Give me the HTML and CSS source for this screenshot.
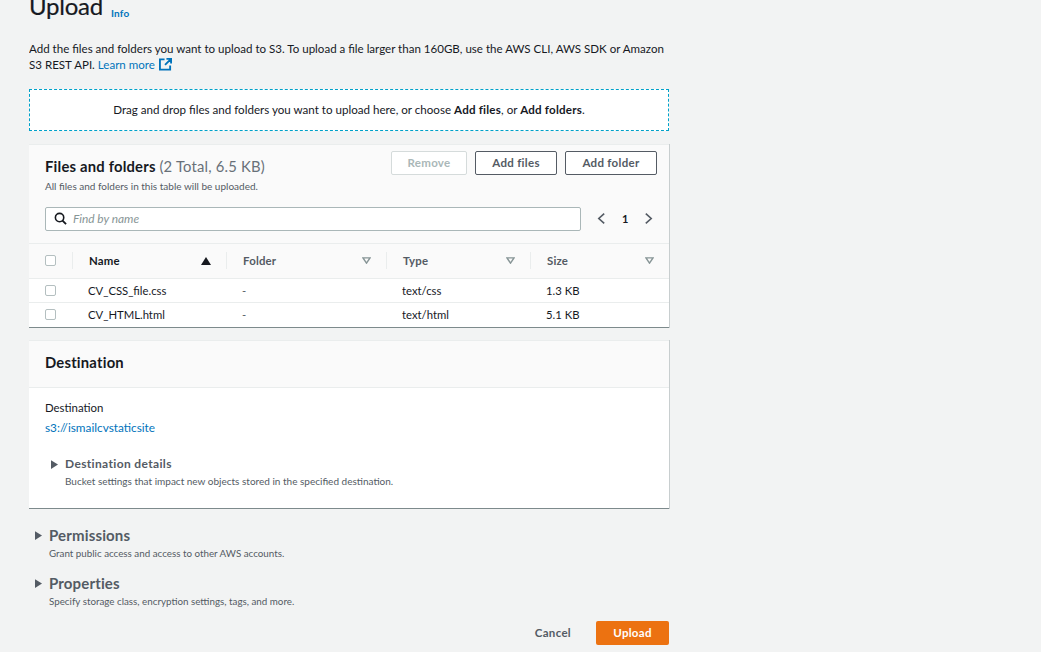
FILE: index.html
```html
<!DOCTYPE html>
<html lang="en">
<head>
<meta charset="utf-8">
<title>Upload</title>
<link rel="stylesheet" href="styles.css">
</head>
<body>
<main class="page">
  <header class="page-head">
    <h1>Upload</h1>
    <a class="info">Info</a>
  </header>
  <p class="intro">Add the files and folders you want to upload to S3. To upload a file larger than 160GB, use the AWS CLI, AWS SDK or Amazon S3 REST API. <a class="link">Learn more</a>
    <svg class="ext" viewBox="0 0 14 14" width="13" height="13"><path d="M6 1.5H1v11h11V8M8 1h5v5M13 1L6.5 7.5" fill="none" stroke="#0073bb" stroke-width="2"/></svg></p>
  <div class="drop">Drag and drop files and folders you want to upload here, or choose <b>Add files</b>, or <b>Add folders</b>.</div>

  <section class="card files">
    <div class="files-head">
      <div class="files-title">
        <h2>Files and folders <span>(2 Total, 6.5 KB)</span></h2>
        <p>All files and folders in this table will be uploaded.</p>
      </div>
      <div class="actions">
        <button class="btn disabled">Remove</button>
        <button class="btn btn-files">Add files</button>
        <button class="btn btn-folder">Add folder</button>
      </div>
    </div>
    <div class="filter">
      <div class="search">
        <svg viewBox="0 0 14 14" width="13" height="13"><circle cx="6" cy="6" r="4.5" fill="none" stroke="#16191f" stroke-width="1.7"/><path d="M9.2 9.2L13 13" stroke="#16191f" stroke-width="2" fill="none"/></svg>
        <span>Find by name</span>
      </div>
      <div class="pager">
        <svg viewBox="0 0 10 14" width="9" height="13"><path d="M8 1.5L2 7l6 5.5" fill="none" stroke="#545b64" stroke-width="1.8"/></svg>
        <b>1</b>
        <svg viewBox="0 0 10 14" width="9" height="13"><path d="M2 1.5L8 7l-6 5.5" fill="none" stroke="#545b64" stroke-width="1.8"/></svg>
      </div>
    </div>
    <div class="row row-head">
      <div class="col-check"><i class="box"></i></div>
      <div class="col col-name active"><span>Name</span><svg viewBox="0 0 10 8" width="10" height="8"><path d="M5 0l5 8H0z" fill="#16191f"/></svg></div>
      <div class="col col-folder"><span>Folder</span><svg class="tri" viewBox="0 0 10 8" width="9" height="7"><path d="M1 1h8L5 7z" fill="none" stroke="#879596" stroke-width="1.6"/></svg></div>
      <div class="col col-type"><span>Type</span><svg class="tri" viewBox="0 0 10 8" width="9" height="7"><path d="M1 1h8L5 7z" fill="none" stroke="#879596" stroke-width="1.6"/></svg></div>
      <div class="col col-size"><span>Size</span><svg class="tri" viewBox="0 0 10 8" width="9" height="7"><path d="M1 1h8L5 7z" fill="none" stroke="#879596" stroke-width="1.6"/></svg></div>
    </div>
    <div class="row row-body">
      <div class="col-check"><i class="box"></i></div>
      <div class="cell col-name">CV_CSS_file.css</div>
      <div class="cell col-folder dash">-</div>
      <div class="cell col-type">text/css</div>
      <div class="cell col-size">1.3 KB</div>
    </div>
    <div class="row row-body">
      <div class="col-check"><i class="box"></i></div>
      <div class="cell col-name">CV_HTML.html</div>
      <div class="cell col-folder dash">-</div>
      <div class="cell col-type">text/html</div>
      <div class="cell col-size">5.1 KB</div>
    </div>
  </section>

  <section class="card dest">
    <h2 class="dest-head">Destination</h2>
    <div class="dest-body">
      <div class="label">Destination</div>
      <a class="link bucket">s3://ismailcvstaticsite</a>
      <div class="expand inner">
        <svg class="caret" viewBox="0 0 8 10" width="7" height="9"><path d="M0 0l8 5-8 5z" fill="#545b64"/></svg>
        <div>
          <h3>Destination details</h3>
          <p>Bucket settings that impact new objects stored in the specified destination.</p>
        </div>
      </div>
    </div>
  </section>

  <div class="expand outer first">
    <svg class="caret" viewBox="0 0 8 10" width="7" height="9"><path d="M0 0l8 5-8 5z" fill="#545b64"/></svg>
    <div><h3>Permissions</h3><p>Grant public access and access to other AWS accounts.</p></div>
  </div>
  <div class="expand outer last">
    <svg class="caret" viewBox="0 0 8 10" width="7" height="9"><path d="M0 0l8 5-8 5z" fill="#545b64"/></svg>
    <div><h3>Properties</h3><p>Specify storage class, encryption settings, tags, and more.</p></div>
  </div>

  <footer class="foot">
    <button class="cancel">Cancel</button>
    <button class="primary">Upload</button>
  </footer>
</main>
</body>
</html>
```

FILE: styles.css
```css
* { box-sizing: border-box; }
html, body { margin: 0; height: 652px; overflow: hidden; }
body { background: #f2f3f3; color: #16191f; font-family: Lato, "Liberation Sans", sans-serif; font-size: 12px; }
.page { width: 641px; margin-left: 29px; height: 652px; overflow: hidden; }
h1, h2, h3, p { margin: 0; }
.page-head { display: flex; align-items: flex-end; height: 25px; margin-top: -4px; }
h1 { font-size: 24px; font-weight: 400; line-height: 30px; letter-spacing: -.25px; -webkit-text-stroke: .2px #16191f; }
.info { color: #0073bb; font-size: 10px; font-weight: 700; margin-left: 8px; margin-bottom: 2px; letter-spacing: .2px; }
.intro { margin-top: 20px; line-height: 16px; font-size: 11.55px; width: 640px; }
.link { color: #0073bb; }
.ext { vertical-align: -2px; margin-left: 1px; }
.drop { margin-top: 16px; width: 640px; height: 42px; background: #fff; border: 1px dashed #00a1c9; text-align: center; line-height: 39px; font-size: 11.6px; }
.drop b { letter-spacing: .2px; }
.card { width: 640px; background: #fff; border-top: 1px solid #eaeded; box-shadow: 0 1px 0 0 #7d8a8c, 1px 0 0 0 #c8cecf, 1px 1px 0 0 #c8cecf; }
.files { margin-top: 13px; height: 183px; }
.files-head { background: #fafafa; display: flex; justify-content: space-between; padding: 6px 12px 0 16px; height: 55px; }
.files-title { padding-top: 6px; }
.files-title h2 { font-size: 14.8px; font-weight: 700; line-height: 18px; letter-spacing: .2px; }
.files-title h2 span { color: #687078; font-weight: 400; }
.files-title p { color: #545b64; font-size: 10px; line-height: 16px; margin-top: 3px; }
.actions { display: flex; gap: 8px; }
.btn { height: 24px; background: #fff; border: 1px solid #545b64; border-radius: 2px; color: #545b64; font: 700 11.5px Lato, sans-serif; letter-spacing: .3px; padding: 0 0 2px; }
.btn.disabled { width: 76px; color: #aab7b8; border-color: #d5dbdb; }
.btn-files { width: 82px; }
.btn-folder { width: 92px; }
.filter { background: #fafafa; height: 44px; padding: 7px 12px 0 16px; display: flex; border-bottom: 1px solid #eaeded; }
.search { width: 536px; height: 24px; background: #fff; border: 1px solid #aab7b8; border-radius: 2px; display: flex; align-items: center; gap: 6px; padding: 0 0 1px 8px; color: #879596; font-style: italic; font-size: 11.9px; }
.pager { display: flex; align-items: center; height: 23px; margin-left: 16px; gap: 16px; font-size: 11px; }
.row { display: flex; align-items: center; }
.row-head { height: 35px; padding-bottom: 1px; background: #fafafa; border-bottom: 1px solid #eaeded; font-weight: 700; color: #545b64; font-size: 11.4px; letter-spacing: .2px; }
.row-body { height: 24px; border-bottom: 1px solid #eaeded; font-size: 11.3px; }
.row-body:last-child { border-bottom: 0; padding-bottom: 1px; }
.col-check { width: 43px; padding-left: 16px; flex: none; }
.box { display: block; width: 11px; height: 11px; border: 1px solid #b4bfc0; border-radius: 2px; background: #fff; }
.col-name { width: 154px; }
.col-folder { width: 160px; }
.col-type { width: 144px; }
.col-size { width: 139px; }
.col { height: 17px; display: flex; align-items: center; justify-content: space-between; padding: 0 15px 0 16px; border-left: 1px solid #eaeded; flex: none; }
.col.active { color: #16191f; }
.cell { padding-left: 16px; flex: none; }
.dash { color: #545b64; }
.dest { margin-top: 13px; height: 168px; }
.dest-head { background: #fafafa; height: 47px; padding: 0 16px; border-bottom: 1px solid #eaeded; font-size: 14.8px; line-height: 43px; font-weight: 700; letter-spacing: .2px; }
.dest-body { padding: 12px 16px; }
.label { font-size: 11.4px; line-height: 16px; }
.bucket { display: block; margin-top: 4px; line-height: 16px; font-size: 11.8px; }
.expand { display: flex; align-items: flex-start; }
.caret { flex: none; }
.inner { margin: 20px 0 0 6px; gap: 7px; }
.inner .caret { margin-top: 4px; }
.inner h3 { color: #545b64; font-size: 12px; line-height: 16px; font-weight: 700; letter-spacing: .35px; }
.inner p { color: #545b64; font-size: 10px; line-height: 16px; margin-top: 1px; }
.outer { gap: 7px; margin-left: 6px; height: 48px; }
.outer.first { margin-top: 18px; }
.outer.last { height: 47px; }
.outer .caret { margin-top: 5px; }
.outer h3 { color: #545b64; font-size: 15px; line-height: 18px; font-weight: 700; letter-spacing: .15px; }
.outer p { color: #545b64; font-size: 9.8px; line-height: 16px; margin-top: 1px; }
.foot { display: flex; justify-content: flex-end; align-items: center; gap: 25px; width: 640px; }
.foot button { font: 700 11.5px Lato, sans-serif; letter-spacing: .3px; border: 0; padding: 0 0 2px; }
.cancel { background: none; color: #545b64; }
.primary { width: 73px; height: 24px; background: #ec7211; color: #fff; border-radius: 2px; }
```
